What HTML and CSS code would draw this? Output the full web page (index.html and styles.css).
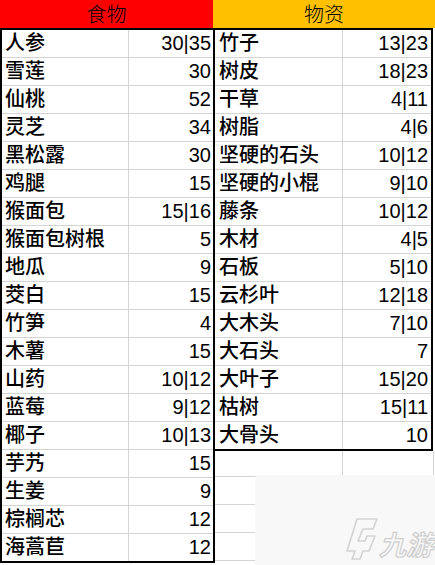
FILE: index.html
```html
<!DOCTYPE html>
<html lang="zh">
<head>
<meta charset="utf-8">
<link rel="stylesheet" href="styles.css">
</head>
<body>
<div class="sheet">
  <div class="head">
    <div class="h food-h">食物</div>
    <div class="h goods-h">物资</div>
  </div>
  <div class="body">
    <div class="tbl food-t">
      <div class="n">人参</div><div class="v">30|35</div>
      <div class="n">雪莲</div><div class="v">30</div>
      <div class="n">仙桃</div><div class="v">52</div>
      <div class="n">灵芝</div><div class="v">34</div>
      <div class="n">黑松露</div><div class="v">30</div>
      <div class="n">鸡腿</div><div class="v">15</div>
      <div class="n">猴面包</div><div class="v">15|16</div>
      <div class="n">猴面包树根</div><div class="v">5</div>
      <div class="n">地瓜</div><div class="v">9</div>
      <div class="n">茭白</div><div class="v">15</div>
      <div class="n">竹笋</div><div class="v">4</div>
      <div class="n">木薯</div><div class="v">15</div>
      <div class="n">山药</div><div class="v">10|12</div>
      <div class="n">蓝莓</div><div class="v">9|12</div>
      <div class="n">椰子</div><div class="v">10|13</div>
      <div class="n">芋艿</div><div class="v">15</div>
      <div class="n">生姜</div><div class="v">9</div>
      <div class="n">棕榈芯</div><div class="v">12</div>
      <div class="n">海蒿苣</div><div class="v">12</div>
    </div>
    <div class="right">
      <div class="tbl goods-t">
        <div class="n">竹子</div><div class="v">13|23</div>
        <div class="n">树皮</div><div class="v">18|23</div>
        <div class="n">干草</div><div class="v">4|11</div>
        <div class="n">树脂</div><div class="v">4|6</div>
        <div class="n">坚硬的石头</div><div class="v">10|12</div>
        <div class="n">坚硬的小棍</div><div class="v">9|10</div>
        <div class="n">藤条</div><div class="v">10|12</div>
        <div class="n">木材</div><div class="v">4|5</div>
        <div class="n">石板</div><div class="v">5|10</div>
        <div class="n">云杉叶</div><div class="v">12|18</div>
        <div class="n">大木头</div><div class="v">7|10</div>
        <div class="n">大石头</div><div class="v">7</div>
        <div class="n">大叶子</div><div class="v">15|20</div>
        <div class="n">枯树</div><div class="v">15|11</div>
        <div class="n">大骨头</div><div class="v">10</div>
      </div>
      <div class="blank">
        <div class="b first"></div><div class="b first"></div>
        <div class="b"></div><div class="b"></div>
        <div class="b"></div><div class="b"></div>
        <div class="b"></div><div class="b"></div>
      </div>
    </div>
  </div>
  <div class="wm">
    <svg class="wm-logo" width="92" height="50" viewBox="0 0 92 50">
      <path d="M14 4 L34 4 L30 14 L20 14 L15 26 L22 26 L24 21 L32 21 L26 36 L20 36 L17 44 L9 44 L12 36 L4 36 Z" fill="none" stroke="#d2d2d2" stroke-width="1.6" stroke-linejoin="round"/>
      <text x="36" y="40" class="wm-text">九游</text>
    </svg>
  </div>
</div>
</body>
</html>
```
FILE: styles.css
```css
* { box-sizing: border-box; }
html, body { margin: 0; padding: 0; background: #fff; }
body {
  width: 435px;
  height: 565px;
  overflow: hidden;
  font-family: "Liberation Sans", "Noto Sans CJK SC", sans-serif;
  font-size: 20px;
  color: #000;
}
.sheet { position: relative; width: 435px; height: 565px; }
.head { display: flex; height: 28px; }
.h {
  height: 28px;
  line-height: 28px;
  text-align: center;
  font-family: "Noto Sans CJK SC", sans-serif;
  font-weight: 300;
  font-size: 20px;
}
.food-h { width: 213px; background: #ff0000; }
.goods-h { flex: 1; background: #ffc000; }
.body { display: flex; align-items: flex-start; }
.tbl { display: grid; border-style: solid; border-color: #000; }
.food-t {
  width: 215px;
  grid-template-columns: 127px 84px;
  border-width: 2px 2px 2px 2px;
}
.right { display: flex; flex-direction: column; width: 220px; }
.goods-t {
  width: 218px;
  grid-template-columns: 128px 88px;
  border-width: 2px 2px 2px 0;
}
.n, .v {
  height: 28px;
  line-height: 27px;
  border-bottom: 1px solid #d4d4d4;
  white-space: nowrap;
}
.n {
  padding-left: 3px;
  border-right: 1px solid #d4d4d4;
  font-weight: 500;
}
.v { text-align: right; padding-right: 2px; }
.goods-t .n { padding-left: 4px; }
.goods-t .v { padding-right: 3px; }
.tbl > :nth-last-child(-n+2) { height: 27px; border-bottom: 0; }
.blank { display: grid; grid-template-columns: 128px 91px; }
.b {
  height: 28px;
  border-bottom: 1px solid #d4d4d4;
  border-right: 1px solid #d4d4d4;
}
.b.first { height: 26px; }
.wm {
  position: absolute;
  left: 255px;
  top: 475px;
  width: 180px;
  height: 90px;
  background: #f8f8f8;
  border-top-left-radius: 4px;
}
.wm-logo { position: absolute; left: 88px; top: 40px; }
.wm-text {
  font-family: "Noto Sans CJK SC", sans-serif;
  font-weight: 700;
  font-style: italic;
  font-size: 27px;
  fill: #fafafa;
  stroke: #cfcfcf;
  stroke-width: 1.2;
}
```
